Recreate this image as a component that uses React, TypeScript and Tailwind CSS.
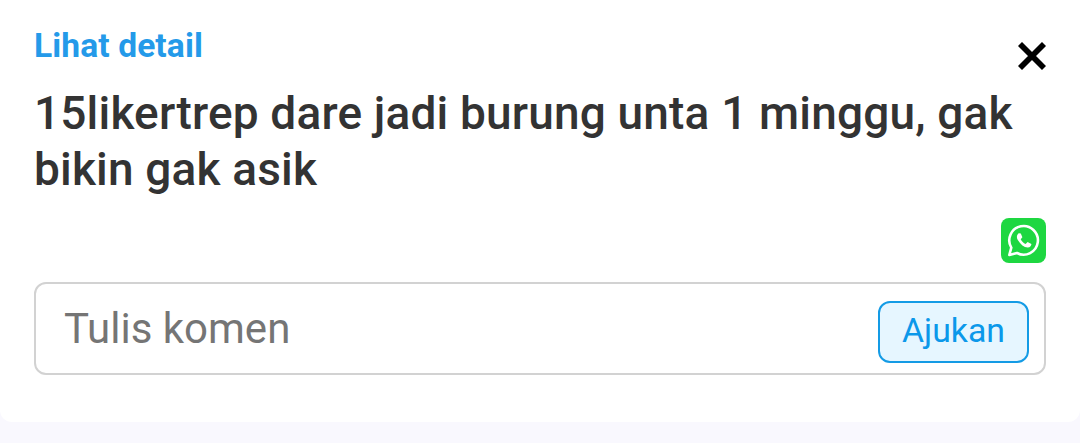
export default function App() {
  return (
    <main className="h-[443px] w-[1080px] overflow-hidden bg-[#f9f8fe] font-['Roboto',sans-serif]">
      <section className="flex h-[422px] flex-col rounded-b-[12px] bg-white px-[34px]">
        <header className="flex h-[85px] items-start justify-between">
          <a className="mt-[26px] text-[33.6px] font-bold leading-[40px] tracking-[0.1px] text-[#249ae9]">Lihat detail</a>
          <button aria-label="Tutup" className="mt-[42px]">
            <svg width="28" height="28" viewBox="0 0 28 28" fill="none" stroke="#000" strokeWidth="5.7">
              <path d="M2 2 26 26M26 2 2 26" />
            </svg>
          </button>
        </header>
        <h1 className="h-[133px] whitespace-nowrap text-[46px] font-medium leading-[56px] tracking-[0.165px] text-[#333]">
          15likertrep dare jadi burung unta 1 minggu, gak<br />bikin gak asik
        </h1>
        <div className="flex h-[64px] justify-end">
          <svg width="45" height="45" viewBox="0 0 45 45">
            <rect width="45" height="45" rx="8" fill="#1ed741" />
            <path d="m8.300 37 2-7.400A14.300 14.300 0 1 1 16 35Z" fill="none" stroke="#fff" strokeWidth="2.6" strokeLinejoin="round" />
            <path transform="translate(15 14.5)" fill="#fff" d="M3 .8C1.200 1.500 0 4.500 1.800 7.400c2.800 4.600 6.200 7.400 9.800 7.700 2.600.1 3.900-2.400 3.800-3.700l-3.800-2-2 2.200C7.500 10.600 5.700 8.800 4.700 6.800l1.700-2L4.800 1Z" />
          </svg>
        </div>
        <form className="flex h-[93px] items-center justify-between rounded-[12px] border-2 border-[#d2d2d2] pr-[15px] pl-[28px]">
          <span className="text-[42px] leading-[50px] text-[#757575]">Tulis komen</span>
          <button type="button" className="mt-[6px] h-[62px] w-[151px] rounded-[12px] border-2 border-[#149be5] bg-[#e6f6ff] pb-[2px] text-[33.8px] leading-[40px] text-[#0b98ea]">Ajukan</button>
        </form>
      </section>
    </main>
  );
}
